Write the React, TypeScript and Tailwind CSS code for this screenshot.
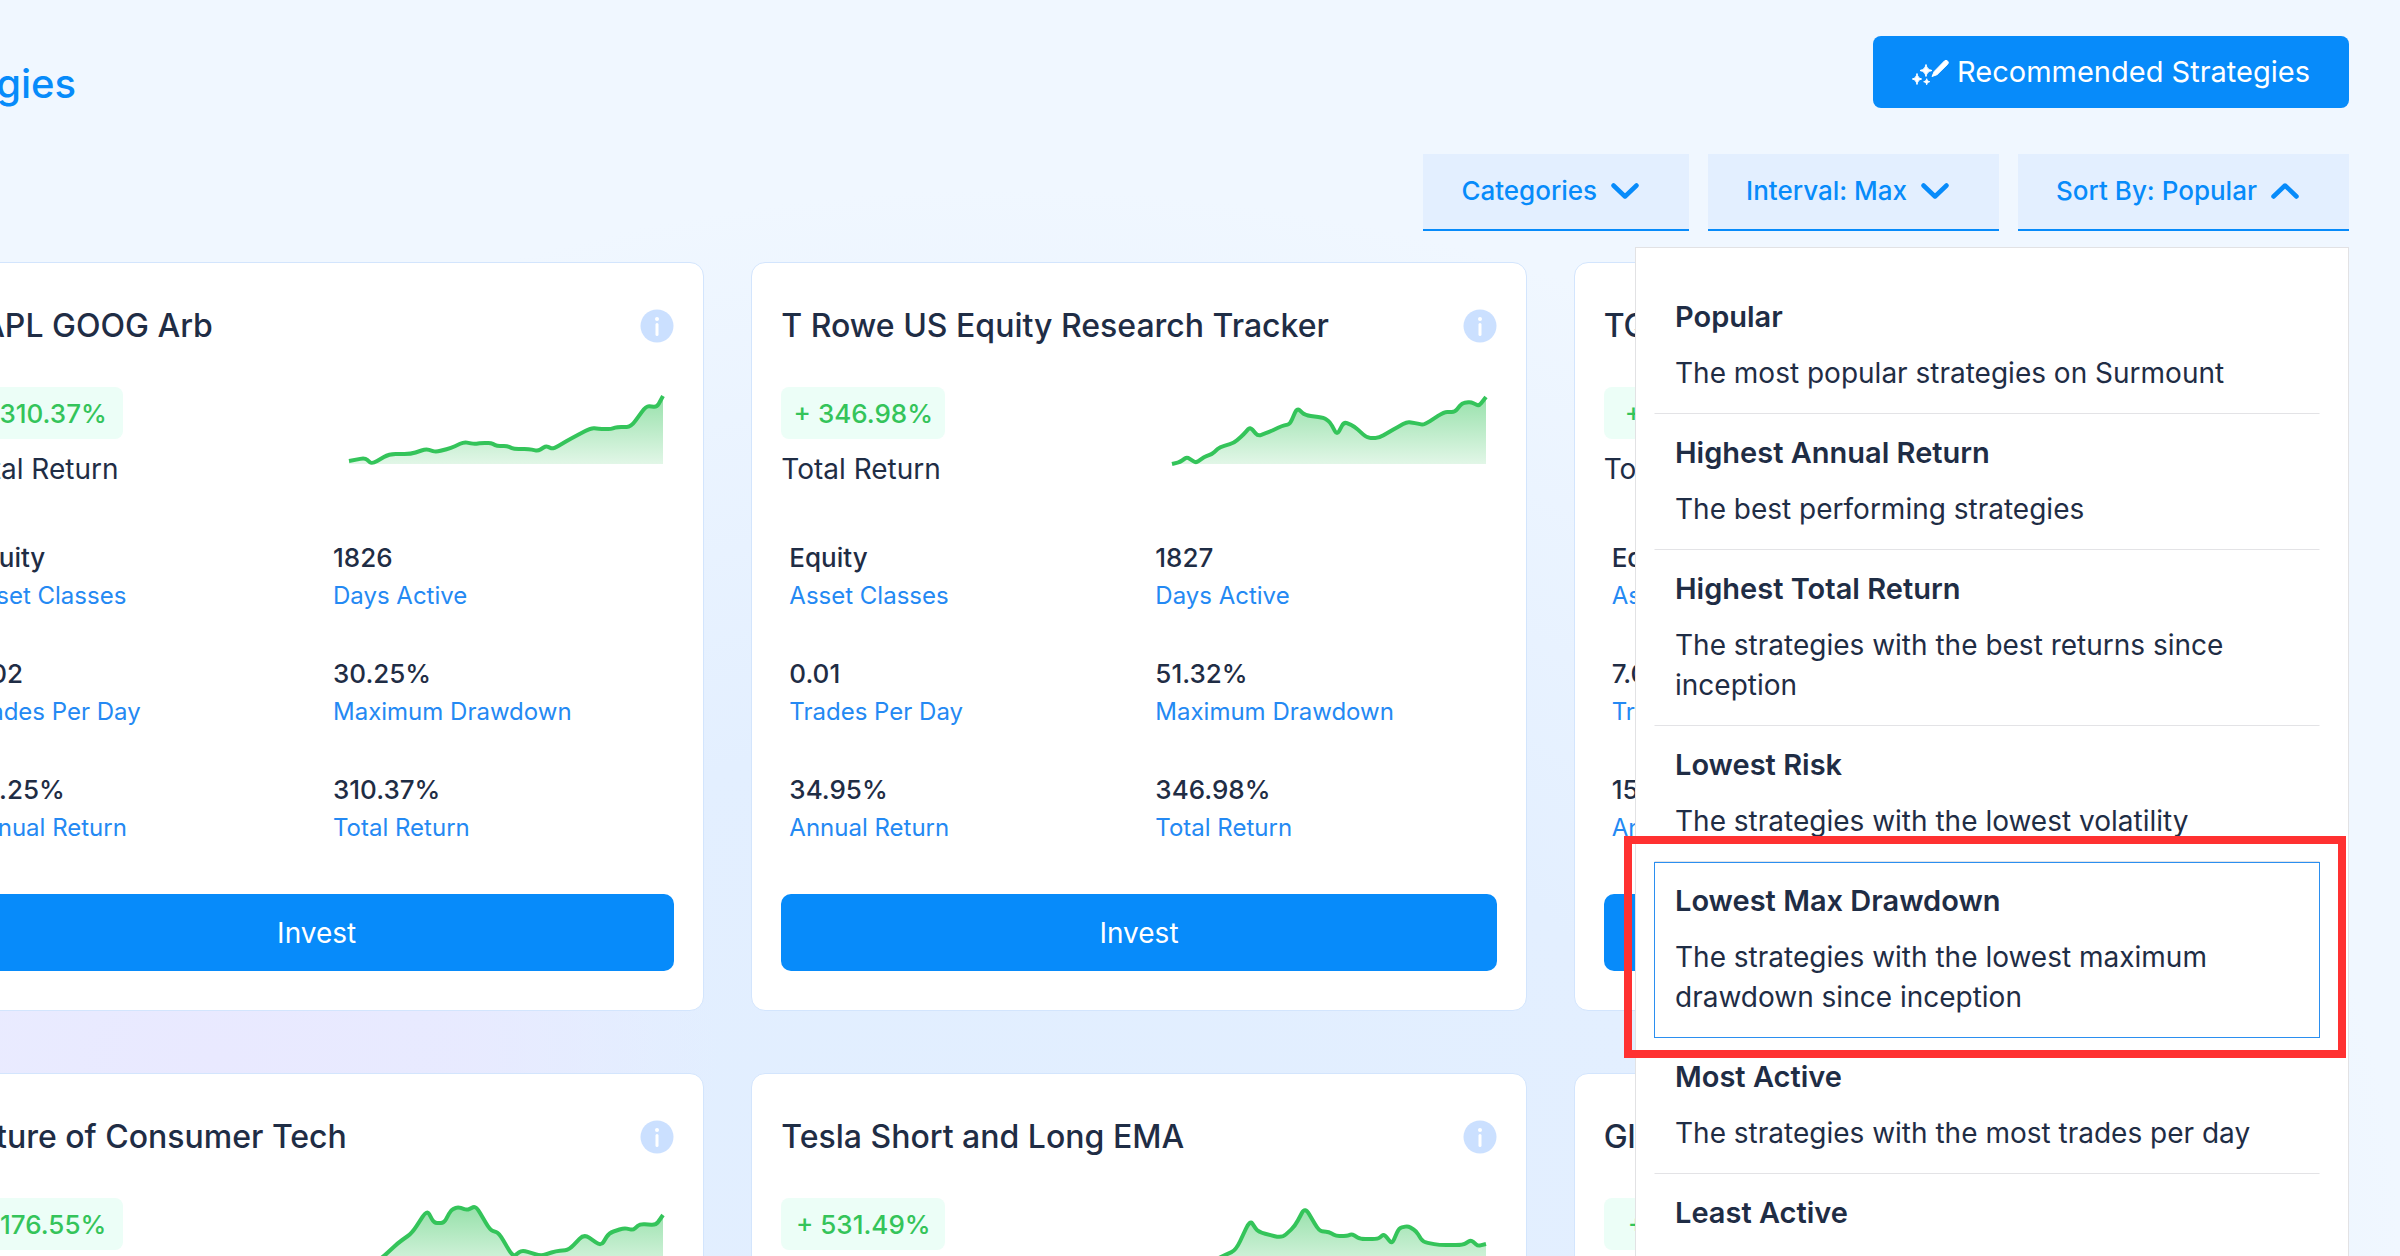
import { useId, useState } from 'react';

type Stat = { value: string; label: string };

type Strategy = {
  name: string;
  totalReturn: string;
  stats: Stat[];
  points: number[][];
};

const buildStats = (values: string[]): Stat[] => [
  { value: values[0], label: 'Asset Classes' },
  { value: values[1], label: 'Days Active' },
  { value: values[2], label: 'Trades Per Day' },
  { value: values[3], label: 'Maximum Drawdown' },
  { value: values[4], label: 'Annual Return' },
  { value: values[5], label: 'Total Return' },
];

const STRATEGIES: Strategy[] = [
  {
    name: 'AAPL GOOG Arb',
    totalReturn: '+ 310.37%',
    stats: buildStats(['Equity', '1826', '0.02', '30.25%', '33.25%', '310.37%']),
    points: [
      [0, 66], [16, 63], [23, 69], [40, 59], [62, 59], [77, 54], [87, 57], [102, 53], [115, 47], [125, 49],
      [133, 48], [142, 48], [148, 51], [158, 51], [165, 54], [180, 54], [189, 56], [197, 51], [204, 54],
      [223, 43], [242, 33], [253, 34], [262, 34], [268, 32], [282, 32], [297, 11], [308, 12], [314, 1],
    ],
  },
  {
    name: 'T Rowe US Equity Research Tracker',
    totalReturn: '+ 346.98%',
    stats: buildStats(['Equity', '1827', '0.01', '51.32%', '34.95%', '346.98%']),
    points: [
      [0, 69], [8, 67], [15, 62], [24, 68], [32, 62], [40, 59], [48, 52], [62, 48], [72, 39], [78, 32],
      [86, 41], [97, 37], [110, 31], [118, 29], [125, 13], [133, 20], [152, 23], [158, 27], [165, 40],
      [172, 27], [182, 31], [195, 43], [207, 43], [222, 34], [235, 27], [243, 28], [252, 30], [272, 17],
      [283, 17], [290, 8], [299, 7], [307, 11], [314, 2],
    ],
  },
  {
    name: 'TQQQ',
    totalReturn: '+ 101.14%',
    stats: buildStats(['Equity', '1827', '7.01', '30.11%', '15.11%', '101.14%']),
    points: [[0, 66], [60, 60], [120, 44], [180, 40], [240, 22], [314, 4]],
  },
  {
    name: 'Future of Consumer Tech',
    totalReturn: '+ 176.55%',
    stats: [],
    points: [
      [0, 68], [20, 60], [34, 51], [49, 37], [63, 27], [78, 4], [85, 17], [95, 17], [102, 4], [109, 1],
      [118, 4], [127, 0], [141, 24], [150, 27], [164, 51], [173, 44], [192, 50], [207, 45], [220, 44],
      [235, 28], [252, 40], [260, 27], [275, 22], [284, 24], [291, 18], [307, 19], [314, 9],
    ],
  },
  {
    name: 'Tesla Short and Long EMA',
    totalReturn: '+ 531.49%',
    stats: [],
    points: [
      [0, 68], [30, 60], [49, 51], [64, 44], [78, 14], [86, 26], [110, 32], [123, 20], [133, 1], [147, 25],
      [157, 26], [164, 30], [175, 30], [180, 28], [188, 33], [206, 33], [212, 28], [220, 38], [227, 22],
      [236, 20], [244, 25], [251, 36], [267, 39], [291, 39], [299, 34], [306, 40], [314, 38],
    ],
  },
  {
    name: 'Global',
    totalReturn: '+ 111.14%',
    stats: [],
    points: [[0, 66], [60, 60], [120, 44], [180, 40], [240, 22], [314, 4]],
  },
];

const SORT_OPTIONS = [
  { title: 'Popular', description: 'The most popular strategies on Surmount' },
  { title: 'Highest Annual Return', description: 'The best performing strategies' },
  { title: 'Highest Total Return', description: 'The strategies with the best returns since inception' },
  { title: 'Lowest Risk', description: 'The strategies with the lowest volatility' },
  { title: 'Lowest Max Drawdown', description: 'The strategies with the lowest maximum drawdown since inception' },
  { title: 'Most Active', description: 'The strategies with the most trades per day' },
  { title: 'Least Active', description: 'The strategies with the least trades per day' },
];

// Softens every corner by curving between the neighbouring segments
function smoothPath(points: number[][]) {
  const last = points[points.length - 1];
  let d = `M${points[0][0]} ${points[0][1]}`;
  for (let i = 1; i < points.length - 1; i++) {
    const [px, py] = points[i - 1];
    const [x, y] = points[i];
    const [nx, ny] = points[i + 1];
    d += ` L${x + (px - x) * 0.3} ${y + (py - y) * 0.3}`;
    d += ` Q${x} ${y} ${x + (nx - x) * 0.3} ${y + (ny - y) * 0.3}`;
  }
  return `${d} L${last[0]} ${last[1]}`;
}

function Sparkline({ points }: { points: number[][] }) {
  const id = useId();
  const line = smoothPath(points);
  return (
    <svg viewBox="0 0 315 70" className="w-[315px] h-[70px] mt-2 mr-2.5 shrink-0 overflow-visible" fill="none" aria-hidden="true">
      <defs>
        <linearGradient id={id} x1="0" y1="0" x2="0" y2="70" gradientUnits="userSpaceOnUse">
          <stop offset="0" stopColor="#34c45a" stopOpacity="0.52" />
          <stop offset="1" stopColor="#34c45a" stopOpacity="0.14" />
        </linearGradient>
      </defs>
      <path d={`${line} L314 69 L0 69 Z`} fill={`url(#${id})`} />
      <path d={line} stroke="#34c45a" strokeWidth="4" strokeLinejoin="round" />
    </svg>
  );
}

function InfoIcon() {
  return (
    <svg viewBox="0 0 34 34" className="size-[34px]" aria-hidden="true">
      <circle cx="17" cy="17" r="16.5" fill="#cbe0ff" />
      <circle cx="17" cy="10" r="2" fill="#fff" />
      <path d="M17 15.5v10" stroke="#fff" strokeWidth="3" strokeLinecap="round" />
    </svg>
  );
}

function MagicPenIcon() {
  return (
    <svg viewBox="0 0 37 26" className="w-[37px] h-[26px] overflow-visible" fill="#fff" stroke="#fff" strokeLinejoin="round" aria-hidden="true">
      <path d="M14 5.500c.9 3.800 2.100 5 6 6-3.900 1-5.100 2.200-6 6-.9-3.800-2.100-5-6-6 3.900-1 5.100-2.200 6-6Z" />
      <path d="M5 14.500c.8 3.500 1.700 4.600 4.700 5.500-3 .9-3.900 2-4.700 5.500-.8-3.500-1.700-4.600-4.700-5.500 3-.9 3.900-2 4.700-5.500Z" />
      <path d="M14.700 19.700c.5 1.900 1.100 2.500 3 3-1.900.5-2.500 1.100-3 3-.5-1.900-1.100-2.500-3-3 1.900-.5 2.500-1.100 3-3Z" />
      <path d="M20 17.500l2.200-5L32.400 2a2.300 2.300 0 0 1 3.300 3.200L25 15.700l-5 1.800Z" />
    </svg>
  );
}

function Chevron({ up = false }: { up?: boolean }) {
  return (
    <svg viewBox="0 0 28 18" className="w-7 h-[18px]" fill="none" aria-hidden="true">
      <path
        d={up ? 'M2.500 14.500 14 3.500l11.500 11' : 'M2.500 3.500 14 14.500l11.500-11'}
        stroke="#078bfa"
        strokeWidth="4.500"
        strokeLinecap="round"
        strokeLinejoin="round"
      />
    </svg>
  );
}

function FilterButton({ label, open = false, onClick }: { label: string; open?: boolean; onClick?: () => void }) {
  return (
    <button
      type="button"
      aria-expanded={open}
      onClick={onClick}
      className="h-[77px] pl-[38px] pr-[50px] pb-0.5 flex items-center gap-3.5 bg-[#e3efff] border-b-2 border-[#078bfa] text-[26px] font-medium text-[#078bfa] whitespace-nowrap"
    >
      {label}
      <Chevron up={open} />
    </button>
  );
}

function SortMenu() {
  return (
    <ul className="absolute z-10 right-0 top-full mt-4 w-[714px] pt-[30px] pb-8 pl-[18px] pr-[28px] bg-white border border-[#e2e2e4]">
      {SORT_OPTIONS.map((option) => {
        const active = option.title === 'Lowest Max Drawdown';
        return (
          <li key={option.title} className="relative">
            <button
              type="button"
              className={`w-full px-5 pt-[18px] pb-5 border text-left text-[#1f2d45] ${
                active ? 'border-[#2b8ff0]' : 'border-transparent border-b-[#e3e3e6]'
              }`}
            >
              <span className="block text-[29px] leading-10 font-semibold">{option.title}</span>
              <span className="block mt-4 text-[28px] leading-10">{option.description}</span>
            </button>
            {active && (
              <span className="absolute z-10 -top-[26px] -bottom-5 -left-[30px] -right-[26px] border-[8px] border-[#ff3131] pointer-events-none" />
            )}
          </li>
        );
      })}
    </ul>
  );
}

function StrategyCard({ strategy }: { strategy: Strategy }) {
  return (
    <article className="px-[29px] pt-[43px] pb-[39px] bg-white border border-[#d3e5fd] rounded-[14px]">
      <div className="flex items-center justify-between">
        <h2 className="text-[32px] leading-10 font-medium text-[#1f2d45] whitespace-nowrap">{strategy.name}</h2>
        <button type="button" aria-label={`About ${strategy.name}`}>
          <InfoIcon />
        </button>
      </div>

      <div className="mt-[41px] flex items-start justify-between">
        <div>
          <div className="min-w-[164px] h-[52px] flex items-center justify-center rounded-lg bg-[#ecfef7] text-[26px] font-medium text-[#34c45a] whitespace-nowrap">
            {strategy.totalReturn}
          </div>
          <p className="mt-2.5 text-[28px] leading-10 text-[#1f2d45]">Total Return</p>
        </div>
        <Sparkline points={strategy.points} />
      </div>

      <dl className="mt-[51px] pl-2 grid grid-cols-[366px_1fr] gap-y-[42px]">
        {strategy.stats.map((stat) => (
          <div key={stat.label} className="flex flex-col-reverse">
            <dt className="mt-0.5 text-2xl leading-9 text-[#2489f3]">{stat.label}</dt>
            <dd className="text-[26px] leading-9 font-medium text-[#1f2d45]">{stat.value}</dd>
          </div>
        ))}
      </dl>

      <button type="button" className="mt-12 w-full h-[77px] rounded-[10px] bg-[#078bfa] text-[28px] text-white">
        Invest
      </button>
    </article>
  );
}

export default function App() {
  const [sortOpen, setSortOpen] = useState(true);

  return (
    <div className="h-screen overflow-hidden font-['Inter',sans-serif] bg-[#f0f7ff] bg-[radial-gradient(ellipse_21%_26%_at_9%_84%,#e9e9ff_0%,#e9e9ffcc_50%,transparent_100%),radial-gradient(ellipse_58%_85%_at_42%_100%,#e1eeff_0%,#e3efff_50%,transparent_100%)]">
      <main className="-ml-[71px] pr-[51px] pt-9">
        <header className="flex items-end justify-between">
          <h1 className="-ml-[47px] text-[40px] leading-[48px] font-medium text-[#078bfa]">Strategies</h1>
          <button
            type="button"
            className="h-[72px] px-[39px] flex items-center gap-2 rounded-lg bg-[#078bfa] text-[29px] text-white whitespace-nowrap"
          >
            <MagicPenIcon />
            Recommended Strategies
          </button>
        </header>

        <div className="relative mt-[46px] flex justify-end gap-[19px]">
          <FilterButton label="Categories" />
          <FilterButton label="Interval: Max" />
          <FilterButton label="Sort By: Popular" open={sortOpen} onClick={() => setSortOpen(!sortOpen)} />
          {sortOpen && <SortMenu />}
        </div>

        <section className="mt-[31px] grid grid-cols-3 gap-x-[47px] gap-y-[62px]">
          {STRATEGIES.map((strategy) => (
            <StrategyCard key={strategy.name} strategy={strategy} />
          ))}
        </section>
      </main>
    </div>
  );
}
